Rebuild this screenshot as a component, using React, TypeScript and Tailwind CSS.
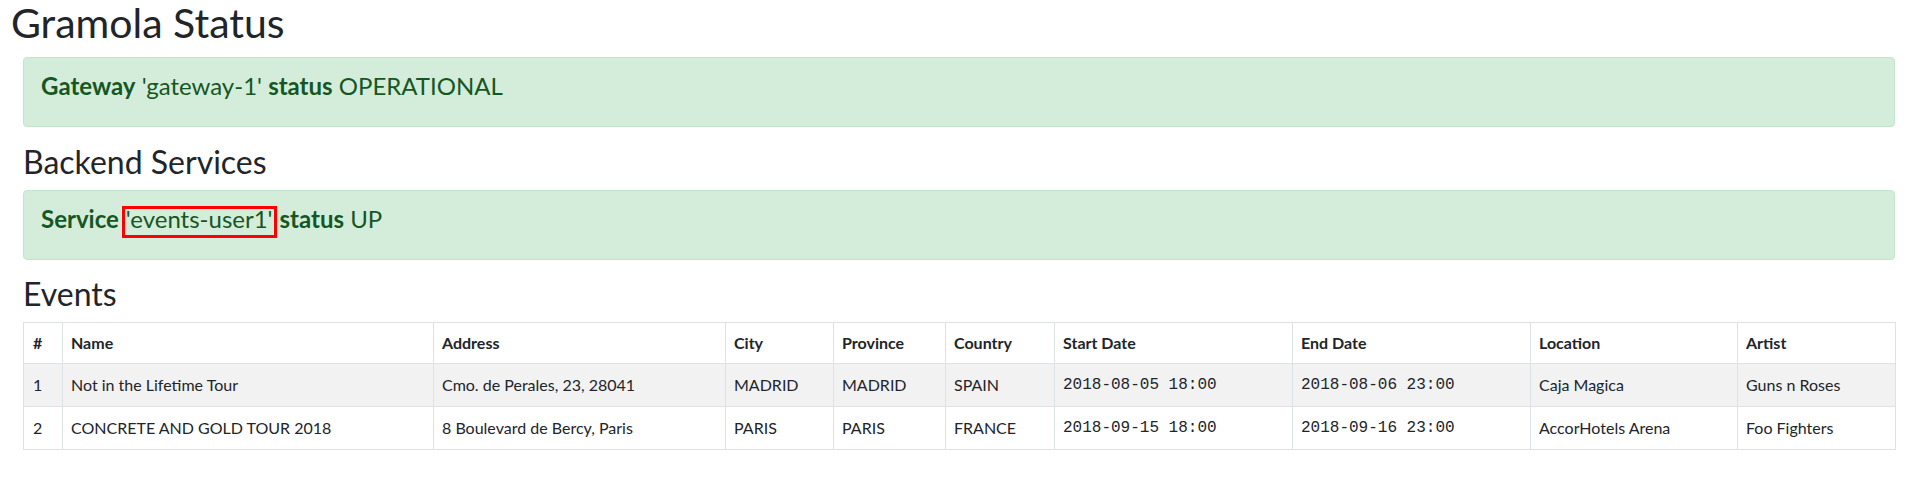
const events = [
  {
    id: 1,
    name: "Not in the Lifetime Tour",
    address: "Cmo. de Perales, 23, 28041",
    city: "MADRID",
    province: "MADRID",
    country: "SPAIN",
    start: "2018-08-05 18:00",
    end: "2018-08-06 23:00",
    location: "Caja Magica",
    artist: "Guns n Roses",
  },
  {
    id: 2,
    name: "CONCRETE AND GOLD TOUR 2018",
    address: "8 Boulevard de Bercy, Paris",
    city: "PARIS",
    province: "PARIS",
    country: "FRANCE",
    start: "2018-09-15 18:00",
    end: "2018-09-16 23:00",
    location: "AccorHotels Arena",
    artist: "Foo Fighters",
  },
];

const headers = [
  "#",
  "Name",
  "Address",
  "City",
  "Province",
  "Country",
  "Start Date",
  "End Date",
  "Location",
  "Artist",
];

const widths = [
  "w-[39px]",
  "w-[371px]",
  "w-[292px]",
  "w-[108px]",
  "w-[112px]",
  "w-[109px]",
  "w-[238px]",
  "w-[238px]",
  "w-[207px]",
  "w-[158px]",
];

const Alert = ({ children }: { children: React.ReactNode }) => (
  <div className="h-[70px] rounded-[4px] border border-[#c3e6cb] bg-[#d4edda] pl-[17px] pt-[13px] text-[24px] leading-[29px] text-[#155724]">
    {children}
  </div>
);

const cell = "border border-[#dee2e6] pl-[8px]";
const mono = "font-['Liberation_Mono',monospace]";

export default function App() {
  return (
    <div className="min-h-screen bg-white font-['Lato',sans-serif] text-[#212529]">
      <h1 className="h-[45px] pl-[11px] text-[41px] font-normal leading-[45px]">
        Gramola Status
      </h1>

      <div className="pl-[23px] pr-[24px]">
        <div className="mt-[12px]">
          <Alert>
            <b>Gateway</b> 'gateway-1' <b>status</b> OPERATIONAL
          </Alert>
        </div>

        <h2 className="mt-[16px] text-[32px] font-normal leading-[38px]">
          Backend Services
        </h2>

        <div className="mt-[9px]">
          <Alert>
            <b>Service</b>
            <span className="ml-[3px] inline-block border-[3px] border-[#ff0000] px-[1px] pb-[6px] leading-[20px]">
              'events-user1'
            </span>
            <b className="ml-[3px]">status</b> UP
          </Alert>
        </div>

        <h2 className="mt-[15px] text-[32px] font-normal leading-[38px]">
          Events
        </h2>

        <table className="mt-[9px] w-full table-fixed border-collapse text-[16px] leading-[24px]">
          <colgroup>
            {widths.map((w, i) => (
              <col key={i} className={w} />
            ))}
          </colgroup>
          <thead>
            <tr className="h-[41px]">
              {headers.map((h, i) => (
                <th
                  key={h}
                  className={`border border-[#dee2e6] text-left align-middle font-bold ${
                    i === 0 ? "pl-[9px]" : "pl-[8px]"
                  }`}
                >
                  {h}
                </th>
              ))}
            </tr>
          </thead>
          <tbody>
            {events.map((e, r) => (
              <tr key={e.id} className={`h-[43px] ${r === 0 ? "bg-[#f2f2f2]" : ""}`}>
                <td className="border border-[#dee2e6] pl-[9px]">{e.id}</td>
                <td className={cell}>{e.name}</td>
                <td className={cell}>{e.address}</td>
                <td className={cell}>{e.city}</td>
                <td className={cell}>{e.province}</td>
                <td className={cell}>{e.country}</td>
                <td className={`${cell} ${mono}`}>{e.start}</td>
                <td className={`${cell} ${mono}`}>{e.end}</td>
                <td className={cell}>{e.location}</td>
                <td className={cell}>{e.artist}</td>
              </tr>
            ))}
          </tbody>
        </table>
      </div>
    </div>
  );
}
